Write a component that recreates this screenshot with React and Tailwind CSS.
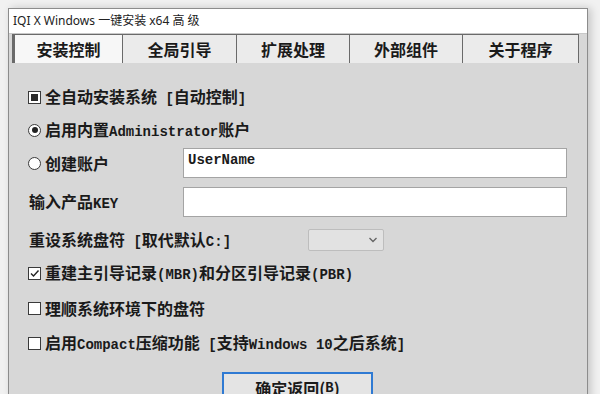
import React from 'react';

const tabs = [
    { label: '安装控制', w: 'w-[111px]', active: true },
    { label: '全局引导', w: 'w-[115px]' },
    { label: '扩展处理', w: 'w-[114px]' },
    { label: '外部组件', w: 'w-[114px]' },
    { label: '关于程序', w: 'w-[117px]' },
];

// latin runs use a mono face like the original dialog font
const Lt = ({ children }) => (
    <span className="font-['Liberation_Mono'] text-[14px] font-bold whitespace-pre">{children}</span>
);

const Box = ({ mark }) => (
    <span className="w-[13px] h-[13px] shrink-0 border border-[#3a3a3a] bg-white flex items-center justify-center">
        {mark === 'fill' && <span className="w-[7px] h-[7px] bg-[#2a2a2a]" />}
        {mark === 'check' && (
            <svg width="11" height="11" viewBox="0 0 11 11" fill="none">
                <path d="M2 5.5 L4.5 8 L9.5 2.5" stroke="#222" strokeWidth="1.4" />
            </svg>
        )}
    </span>
);

const Radio = ({ on }) => (
    <span className="w-[13px] h-[13px] shrink-0 rounded-full border border-[#3a3a3a] bg-white flex items-center justify-center">
        {on && <span className="w-[6px] h-[6px] rounded-full bg-[#222]" />}
    </span>
);

const App = () => {
    return (
        <div className="w-[600px] h-[394px] overflow-hidden bg-[#f1f1f1] pt-[8px] pl-[8px] font-['Noto_Sans_CJK_SC',sans-serif] text-[#1a1a1a]">
            <div className="w-[580px] h-[420px] flex flex-col border border-[#8c8c8c] bg-[#d7d7d7] shadow-[3px_0_8px_rgba(0,0,0,0.18)]">
                {/* title bar */}
                <div className="h-[24px] bg-white flex items-center pl-[4px] text-[12px] text-[#222] font-['Noto_Sans','Noto_Sans_CJK_SC',sans-serif]">
                    IQI X Windows 一键安装 x64 高 级
                </div>

                {/* tabs */}
                <div className="h-[30px] flex pl-[3px] bg-[#d7d7d7] border-t border-[#c8c8c8]">
                    {tabs.map(t => (
                        <div
                            key={t.label}
                            className={`${t.w} h-full flex items-center justify-center text-[16px] font-bold border border-[#6a6a6a] border-b-0 -ml-px first:ml-0 ${t.active ? 'bg-[#f7f7f7] border-l-[3px]' : 'bg-[#ebebeb]'}`}
                        >
                            {t.label}
                        </div>
                    ))}
                </div>

                {/* panel */}
                <div className="flex-1 flex flex-col pt-[19px] pl-[19px] text-[16px] font-semibold">
                    <div className="h-[30px] flex items-center gap-[4px]">
                        <Box mark="fill" />
                        <span>全自动安装系统<Lt> [</Lt>自动控制<Lt>]</Lt></span>
                    </div>
                    <div className="mt-[3px] h-[30px] flex items-center gap-[4px]">
                        <Radio on />
                        <span>启用内置<Lt>Administrator</Lt>账户</span>
                    </div>
                    <div className="mt-[3px] h-[30px] flex items-center">
                        <div className="w-[155px] flex items-center gap-[4px]">
                            <Radio />
                            <span>创建账户</span>
                        </div>
                        <div className="w-[384px] h-[30px] bg-white border border-[#a4a4a4] flex items-center pl-[4px] pb-[6px]">
                            <span className="font-['Liberation_Mono'] text-[14px] font-bold">UserName</span>
                        </div>
                    </div>
                    <div className="mt-[9px] h-[30px] flex items-center">
                        <span className="w-[155px] pl-px">输入产品<Lt>KEY</Lt></span>
                        <div className="w-[384px] h-[30px] bg-white border border-[#a4a4a4]" />
                    </div>
                    <div className="mt-[12px] h-[22px] flex items-center">
                        <span className="w-[280px] pl-px">重设系统盘符<Lt> [</Lt>取代默认<Lt>C:]</Lt></span>
                        <div className="w-[76px] h-[22px] bg-[#e2e2e2] border border-[#bdbdbd] rounded-[2px] flex items-center justify-end pr-[5px]">
                            <svg width="10" height="6" viewBox="0 0 10 6" fill="none">
                                <path d="M1.5 1 L5 4.5 L8.5 1" stroke="#666" strokeWidth="1.4" />
                            </svg>
                        </div>
                    </div>
                    <div className="mt-[7px] h-[30px] flex items-center gap-[4px]">
                        <Box mark="check" />
                        <span>重建主引导记录<Lt>(MBR)</Lt>和分区引导记录<Lt>(PBR)</Lt></span>
                    </div>
                    <div className="mt-[5px] h-[30px] flex items-center gap-[4px]">
                        <Box />
                        <span>理顺系统环境下的盘符</span>
                    </div>
                    <div className="mt-[5px] h-[30px] flex items-center gap-[4px]">
                        <Box />
                        <span>启用<Lt>Compact</Lt>压缩功能<Lt> [</Lt>支持<Lt>Windows 10</Lt>之后系统<Lt>]</Lt></span>
                    </div>
                    <div className="mt-[14px] pl-[194px]">
                        <div className="w-[151px] h-[32px] border-2 border-[#2f7ad3] bg-[#e4e4e4] flex items-center justify-center text-[16px] font-bold">
                            确定返回(<Lt>B</Lt>)
                        </div>
                    </div>
                </div>
            </div>
        </div>
    );
};

export default App;
